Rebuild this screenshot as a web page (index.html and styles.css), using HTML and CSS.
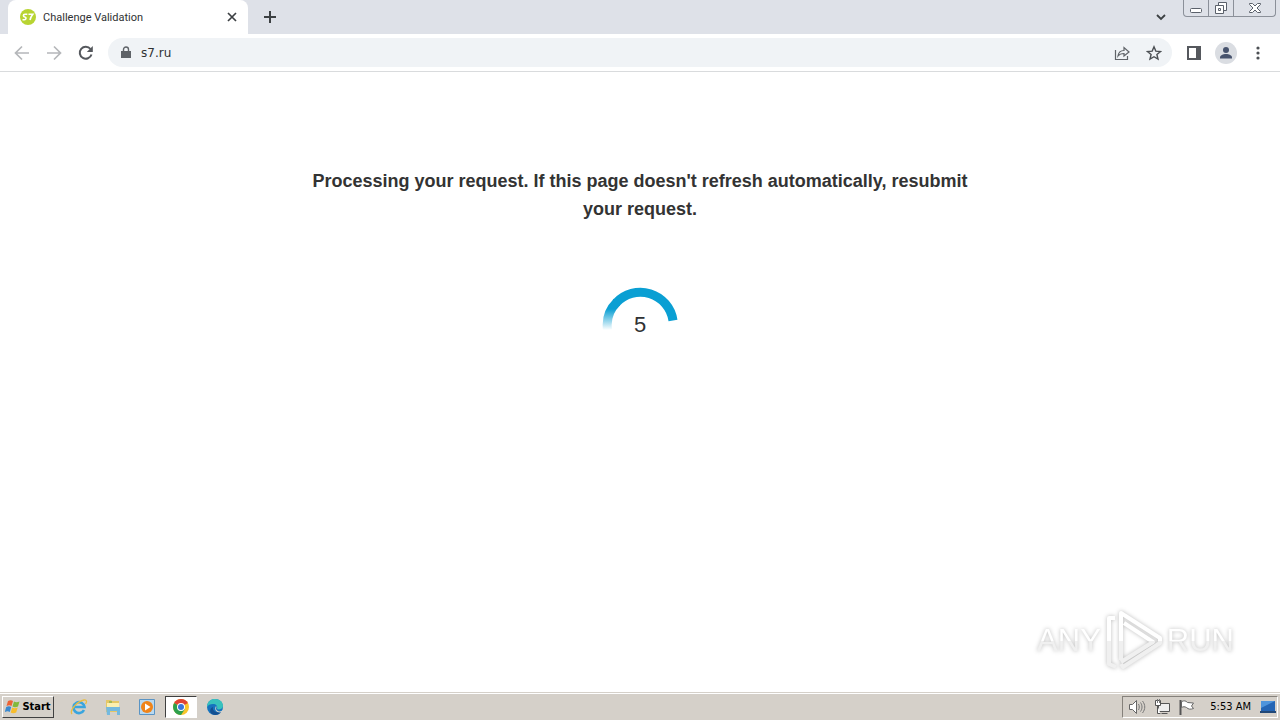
FILE: index.html
```html
<!DOCTYPE html>
<html lang="en">
<head>
  <meta charset="UTF-8">
  <meta name="viewport" content="width=device-width, initial-scale=1.0">
  <title>Challenge Validation</title>
  <link rel="stylesheet" href="styles.css">
</head>
<body>
<header class="tab-strip">
  <div class="tab">
    <svg class="favicon" width="16" height="16" viewBox="0 0 16 16">
      <circle cx="8" cy="8" r="8" fill="#b8d432"/>
      <path d="M7.3 5.2H5c-2.2 0-2 2.5-.2 2.8 1.8.3 1.5 2.7-.4 2.7H2.5M8.5 5.2h4.3c-1.5 1.8-2.3 3.5-2.8 5.8" fill="none" stroke="#fff" stroke-width="1.6"/>
    </svg>
    <span class="tab-title">Challenge Validation</span>
    <button class="icon-btn tab-close" aria-label="Close tab">
      <svg width="10" height="10" viewBox="0 0 10 10"><path d="M1 1l8 8M9 1L1 9" stroke="#3c4043" stroke-width="1.7"/></svg>
    </button>
  </div>
  <button class="icon-btn new-tab" aria-label="New tab">
    <svg width="12" height="12" viewBox="0 0 12 12"><path d="M6 0v12M0 6h12" stroke="#3c4043" stroke-width="2"/></svg>
  </button>
  <button class="icon-btn tab-search" aria-label="Search tabs">
    <svg width="12" height="12" viewBox="0 0 12 12"><path d="M2 4l4 4 4-4" fill="none" stroke="#3c4043" stroke-width="1.8"/></svg>
  </button>
  <div class="window-buttons">
    <button aria-label="Minimize">
      <svg width="14" height="14" viewBox="0 0 14 14"><rect x="1.5" y="7.5" width="11" height="4" rx="1" fill="#fff" stroke="#5b616b"/></svg>
    </button>
    <button aria-label="Restore">
      <svg width="14" height="14" viewBox="0 0 14 14"><path d="M4.5 1.5h8v8h-8z" fill="#fff" stroke="#5b616b"/><path d="M1.5 4.5h8v8h-8z" fill="#fff" stroke="#5b616b"/><path d="M4.5 7.5h2v2h-2z" fill="none" stroke="#5b616b"/></svg>
    </button>
    <button class="window-close" aria-label="Close">
      <svg width="14" height="14" viewBox="0 0 14 14"><path d="M1.5 2.5h3L7 5l2.5-2.5h3v1L9 7l3.500 3.500v1h-3L7 9l-2.500 2.500h-3v-1L5 7 1.500 3.500z" fill="#fff" stroke="#5b616b"/></svg>
    </button>
  </div>
</header>

<nav class="toolbar">
  <button class="icon-btn" aria-label="Back">
    <svg width="16" height="16" viewBox="0 0 16 16"><path d="M15 8H2M8 1.500L1.500 8 8 14.500" fill="none" stroke="#b5b7ba" stroke-width="1.7"/></svg>
  </button>
  <button class="icon-btn" aria-label="Forward">
    <svg width="16" height="16" viewBox="0 0 16 16"><path d="M1 8h13M8 1.500L14.500 8 8 14.500" fill="none" stroke="#b5b7ba" stroke-width="1.7"/></svg>
  </button>
  <button class="icon-btn" aria-label="Reload">
    <svg width="16" height="16" viewBox="0 0 16 16"><path d="M13.500 9.500A6 6 0 1 1 12.500 4" fill="none" stroke="#55585d" stroke-width="2"/><path d="M14.800 1v6H8.800z" fill="#55585d"/></svg>
  </button>
  <div class="address-bar">
    <svg width="10" height="14" viewBox="0 0 10 14"><path d="M0 5h10v7H0z" fill="#5f6368"/><path d="M2.500 6V3.500a2.500 2.500 0 0 1 5 0V6" fill="none" stroke="#5f6368" stroke-width="1.4"/></svg>
    <input class="address" type="text" value="s7.ru" aria-label="Address">
    <button class="icon-btn" aria-label="Share">
      <svg width="16" height="16" viewBox="0 0 16 16"><path d="M1.500 5v9.500h12V11" fill="none" stroke="#5f6368" stroke-width="1.2"/><path d="M4 11c.5-4 2.500-5.500 6-5.500V2.500L15 7l-5 4V8.500c-3 0-4.500.5-6 2.500z" fill="none" stroke="#5f6368" stroke-width="1.2"/></svg>
    </button>
    <button class="icon-btn" aria-label="Bookmark">
      <svg width="16" height="16" viewBox="0 0 16 16"><path d="M8 1.800l1.800 4.300 4.700.4-3.600 3 1.100 4.600L8 11.700l-4 2.400 1.100-4.600-3.600-3 4.700-.4z" fill="none" stroke="#4c5054" stroke-width="1.4"/></svg>
    </button>
  </div>
  <button class="icon-btn" aria-label="Side panel">
    <svg width="14" height="14" viewBox="0 0 14 14"><path d="M1 1h12v12H1z" fill="none" stroke="#55585d" stroke-width="2"/><path d="M9 1h4v12H9z" fill="#55585d"/></svg>
  </button>
  <button class="icon-btn" aria-label="Profile">
    <svg width="22" height="22" viewBox="0 0 22 22"><circle cx="11" cy="11" r="11" fill="#dadde2"/><circle cx="11" cy="8" r="3" fill="#47536d"/><path d="M5 16.500v-1c0-2.300 3-3.500 6-3.500s6 1.200 6 3.500v1z" fill="#47536d"/></svg>
  </button>
  <button class="icon-btn" aria-label="Menu">
    <svg width="4" height="14" viewBox="0 0 4 14" fill="#4c5054"><circle cx="2" cy="2" r="1.6"/><circle cx="2" cy="7" r="1.6"/><circle cx="2" cy="12" r="1.6"/></svg>
  </button>
</nav>

<main class="page">
  <h1 class="message">Processing your request. If this page doesn't refresh automatically, resubmit your request.</h1>
  <div class="spinner">
    <svg width="76" height="76" viewBox="0 0 76 76">
      <defs>
        <linearGradient id="fade" gradientUnits="userSpaceOnUse" x1="0" y1="22" x2="0" y2="43">
          <stop offset="0" stop-color="#0a9fd3"/>
          <stop offset="1" stop-color="#0a9fd3" stop-opacity="0"/>
        </linearGradient>
      </defs>
      <path d="M5.500 43A33 33 0 0 1 15 15" fill="none" stroke="url(#fade)" stroke-width="9"/>
      <path d="M14 16A33 33 0 0 1 71 33.500" fill="none" stroke="#0a9fd3" stroke-width="9"/>
    </svg>
    <span class="countdown">5</span>
  </div>
  <div class="watermark">
    <span>ANY</span>
    <svg width="60" height="62" viewBox="0 0 60 62">
      <defs>
        <linearGradient id="shade" gradientUnits="userSpaceOnUse" x1="0" y1="0" x2="0" y2="62">
          <stop offset=".5" stop-color="#fff"/>
          <stop offset=".5" stop-color="#f0f0f0"/>
        </linearGradient>
      </defs>
      <path d="M11 8H5v46l7 3M17 50V3l39 25v5L19 57l-2-3M20 13l29 19-32 20" fill="none" stroke="url(#shade)" stroke-width="4" stroke-linejoin="round"/>
    </svg>
    <span>RUN</span>
  </div>
</main>

<footer class="taskbar">
  <button class="start">
    <svg width="16" height="16" viewBox="0 0 16 16"><path d="M3 2c2-1 3.500-1 5 0L6.500 7c-1.500-1-3-1-5 0z" fill="#ed6334"/><path d="M9 2.500c1.500 1 3.500 1 5.500 0L13 7.500c-2 1-4 1-5.500 0z" fill="#82b93b"/><path d="M1.200 8c2-1 3.500-1 5 0l-1.400 5c-1.500-1-3-1-5 0z" fill="#3a89cf"/><path d="M7.200 8.500c1.500 1 3.500 1 5.500 0l-1.500 5c-2 1-4 1-5.500 0z" fill="#f8bd2c"/></svg>
    Start
  </button>
  <div class="launchers">
    <button aria-label="Internet Explorer">
      <svg width="18" height="18" viewBox="0 0 18 18"><path d="M14 12a5.500 5.500 0 1 1 .5-3H5" fill="none" stroke="#3aa5de" stroke-width="2.6"/><path d="M2 16C-1 12 8 3 14 2c3-.5 3 2 1.500 4" fill="none" stroke="#e9bd42" stroke-width="1.3"/></svg>
    </button>
    <button aria-label="Explorer">
      <svg width="18" height="18" viewBox="0 0 18 18"><path d="M2 2h5l1 1h7v11H2z" fill="#e5c766"/><path d="M3 5h12v5H3z" fill="#fbefb0"/><path d="M2 9h14v8h-3v-4H6v4H3z" fill="#74b9df"/><path d="M5 4h3" stroke="#61a84c"/></svg>
    </button>
    <button aria-label="Media Player">
      <svg width="18" height="18" viewBox="0 0 18 18"><path d="M1.500 1.500h15v15h-15z" fill="#b9d9f0" stroke="#5a94c4"/><circle cx="9" cy="9" r="6" fill="#f08419"/><path d="M7 5.500v7l5.500-3.500z" fill="#fff"/></svg>
    </button>
    <button class="active" aria-label="Chrome">
      <svg width="18" height="18" viewBox="0 0 18 18"><circle cx="9" cy="9" r="8" fill="#f9c52c"/><path d="M9 9L2.100 5A8 8 0 0 1 15.900 5z" fill="#e04335"/><path d="M9 9L2.100 5A8 8 0 0 0 9 17l4-6z" fill="#2da04d"/><circle cx="9" cy="9" r="4" fill="#fff"/><circle cx="9" cy="9" r="3" fill="#3975dc"/></svg>
    </button>
    <button aria-label="Edge">
      <svg width="18" height="18" viewBox="0 0 18 18"><circle cx="9" cy="9" r="8" fill="#1673be"/><path d="M1 8C2 2 6 1 9 1c5 0 8 3 8 7 0 3-4 4-6 3 1-3-1-5-4-5-3 0-5 1-6 3z" fill="#38c2bd"/><path d="M7 9c-1 4 3 6 8 5-2 3-6 4-9 2s-2-6 1-7z" fill="#134f91"/><path d="M10 8c1 1 0 2 0 3 1 3 5 3 7 1v2l-3 .5c-4 0-6-3-4-6.500z" fill="#d6d2ca"/></svg>
    </button>
  </div>
  <div class="tray">
    <svg width="18" height="16" viewBox="0 0 18 16"><path d="M1.500 5.500h3l4-4v13l-4-4h-3z" fill="#fff" stroke="#666"/><path d="M10.500 5c1 2 1 4 0 6M12.500 3.500c2 3 2 6 0 9M14.500 2c3 4 3 8 0 12" fill="none" stroke="#777"/></svg>
    <svg width="16" height="16" viewBox="0 0 16 16"><path d="M4.500 4.500h11v8h-11zM7.500 14.500h6" fill="#eee" stroke="#555"/><path d="M1.500 1.500h5v5h-5zM3.500 7v7.500h3" fill="#fff" stroke="#555"/><path d="M3.500 0v4M5.500 0v4" stroke="#777"/></svg>
    <svg width="18" height="16" viewBox="0 0 18 16"><path d="M2.500 1v15" stroke="#555" stroke-width="2"/><path d="M3.500 2.500c3-1 4-1 6 1l6 .5-2 3 2 2.500c-3 1-5 1-7-1-2-1-3-1-5 0z" fill="#fff" stroke="#666"/></svg>
    <time class="clock">5:53 AM</time>
    <svg width="16" height="16" viewBox="0 0 16 16"><path d="M1 2h14v10H1z" fill="#2465b5"/><path d="M1 2h14L1 9z" fill="#4e94dc"/><path d="M0 13h16" stroke="#214878" stroke-width="2"/></svg>
  </div>
</footer>
</body>
</html>
```
FILE: styles.css
```css
:root {
  --strip-color: #dee1e8;
  --bar-color: #f0f3f6;
  --taskbar-color: #d5d0c9;
  --text-color: #2f3133;
}

* {
  box-sizing: border-box;
}

body {
  margin: 0;
  min-height: 100vh;
  display: flex;
  flex-direction: column;
  background-color: #ffffff;
  color: var(--text-color);
  font-family: 'Liberation Sans', Arial, sans-serif;
}

svg {
  display: block;
  flex-shrink: 0;
}

button {
  padding: 0;
  border: none;
  background: none;
  display: flex;
  align-items: center;
  justify-content: center;
}

.icon-btn {
  width: 24px;
  height: 24px;
  flex-shrink: 0;
}

.tab-strip {
  display: flex;
  align-items: center;
  height: 34px;
  padding: 0 4px 0 8px;
  background-color: var(--strip-color);
}

.tab {
  display: flex;
  align-items: center;
  gap: 7px;
  width: 240px;
  height: 34px;
  padding: 0 4px 0 12px;
  border-radius: 8px 8px 0 0;
  background-color: #ffffff;
}

.tab-title {
  flex: 1;
  font-family: Roboto, sans-serif;
  font-size: 11px;
}

.new-tab {
  margin-left: 10px;
}

.tab-search {
  margin-left: auto;
}

.window-buttons {
  display: flex;
  align-self: flex-start;
  height: 17px;
  margin-left: 10px;
  border: 1px solid #8b9099;
  border-top: none;
  border-radius: 0 0 4px 4px;
}

.window-buttons button {
  width: 25px;
  border-right: 1px solid #8b9099;
}

.window-buttons .window-close {
  width: 41px;
  border-right: none;
}

.toolbar {
  display: flex;
  align-items: center;
  gap: 8px;
  height: 38px;
  padding: 0 10px;
  border-bottom: 1px solid #d9dbdd;
}

.address-bar {
  flex: 1;
  display: flex;
  align-items: center;
  gap: 8px;
  height: 29px;
  margin: 0 2px;
  padding: 0 6px 0 13px;
  border-radius: 15px;
  background-color: var(--bar-color);
}

.address {
  flex: 1;
  min-width: 0;
  padding: 0 2px;
  border: none;
  background: none;
  color: var(--text-color);
  font-family: 'DejaVu Sans', sans-serif;
  font-size: 12px;
}

.page {
  flex: 1;
  position: relative;
  display: flex;
  flex-direction: column;
  align-items: center;
  padding-top: 95px;
}

.message {
  max-width: 680px;
  margin: 0;
  color: #333333;
  font-size: 18px;
  line-height: 28px;
  text-align: center;
}

.spinner {
  display: grid;
  place-items: center;
  margin-top: 64px;
}

.spinner > * {
  grid-area: 1 / 1;
}

.countdown {
  font-size: 22px;
}

/* logo over the lower right corner of the page */
.watermark {
  position: absolute;
  right: 46px;
  bottom: 20px;
  display: flex;
  align-items: center;
  gap: 3px;
  font-size: 31px;
  filter: drop-shadow(0 0 2px #bbbbbb);
}

.watermark span {
  color: transparent;
  background: linear-gradient(#ffffff 50%, #f0f0f0 50%);
  background-clip: text;
  -webkit-background-clip: text;
}

.taskbar {
  display: flex;
  align-items: center;
  height: 28px;
  padding: 0 2px;
  border-top: 1px solid #d5d0c9;
  box-shadow: inset 0 1px #ffffff;
  background-color: var(--taskbar-color);
}

.start {
  gap: 1px;
  width: 52px;
  height: 22px;
  border: 1px solid #ffffff;
  border-right-color: #404040;
  border-bottom-color: #404040;
  color: #000000;
  font-family: 'DejaVu Sans Condensed', 'DejaVu Sans', sans-serif;
  font-size: 11px;
  font-weight: bold;
}

.launchers {
  display: flex;
  gap: 2px;
  margin-left: 9px;
}

.launchers button {
  width: 32px;
  height: 22px;
}

.launchers .active {
  border: 1px solid #ffffff;
  border-top-color: #404040;
  border-left-color: #404040;
  background-color: #ffffff;
}

.tray {
  display: flex;
  align-items: center;
  gap: 8px;
  height: 22px;
  margin-left: auto;
  padding: 0 1px 0 5px;
  border: 1px solid #ffffff;
  border-top-color: #85817b;
  border-left-color: #85817b;
}

.clock {
  margin: 0 1px 0 6px;
  color: #000000;
  font-family: 'DejaVu Sans Condensed', 'DejaVu Sans', sans-serif;
  font-size: 11px;
}
```
